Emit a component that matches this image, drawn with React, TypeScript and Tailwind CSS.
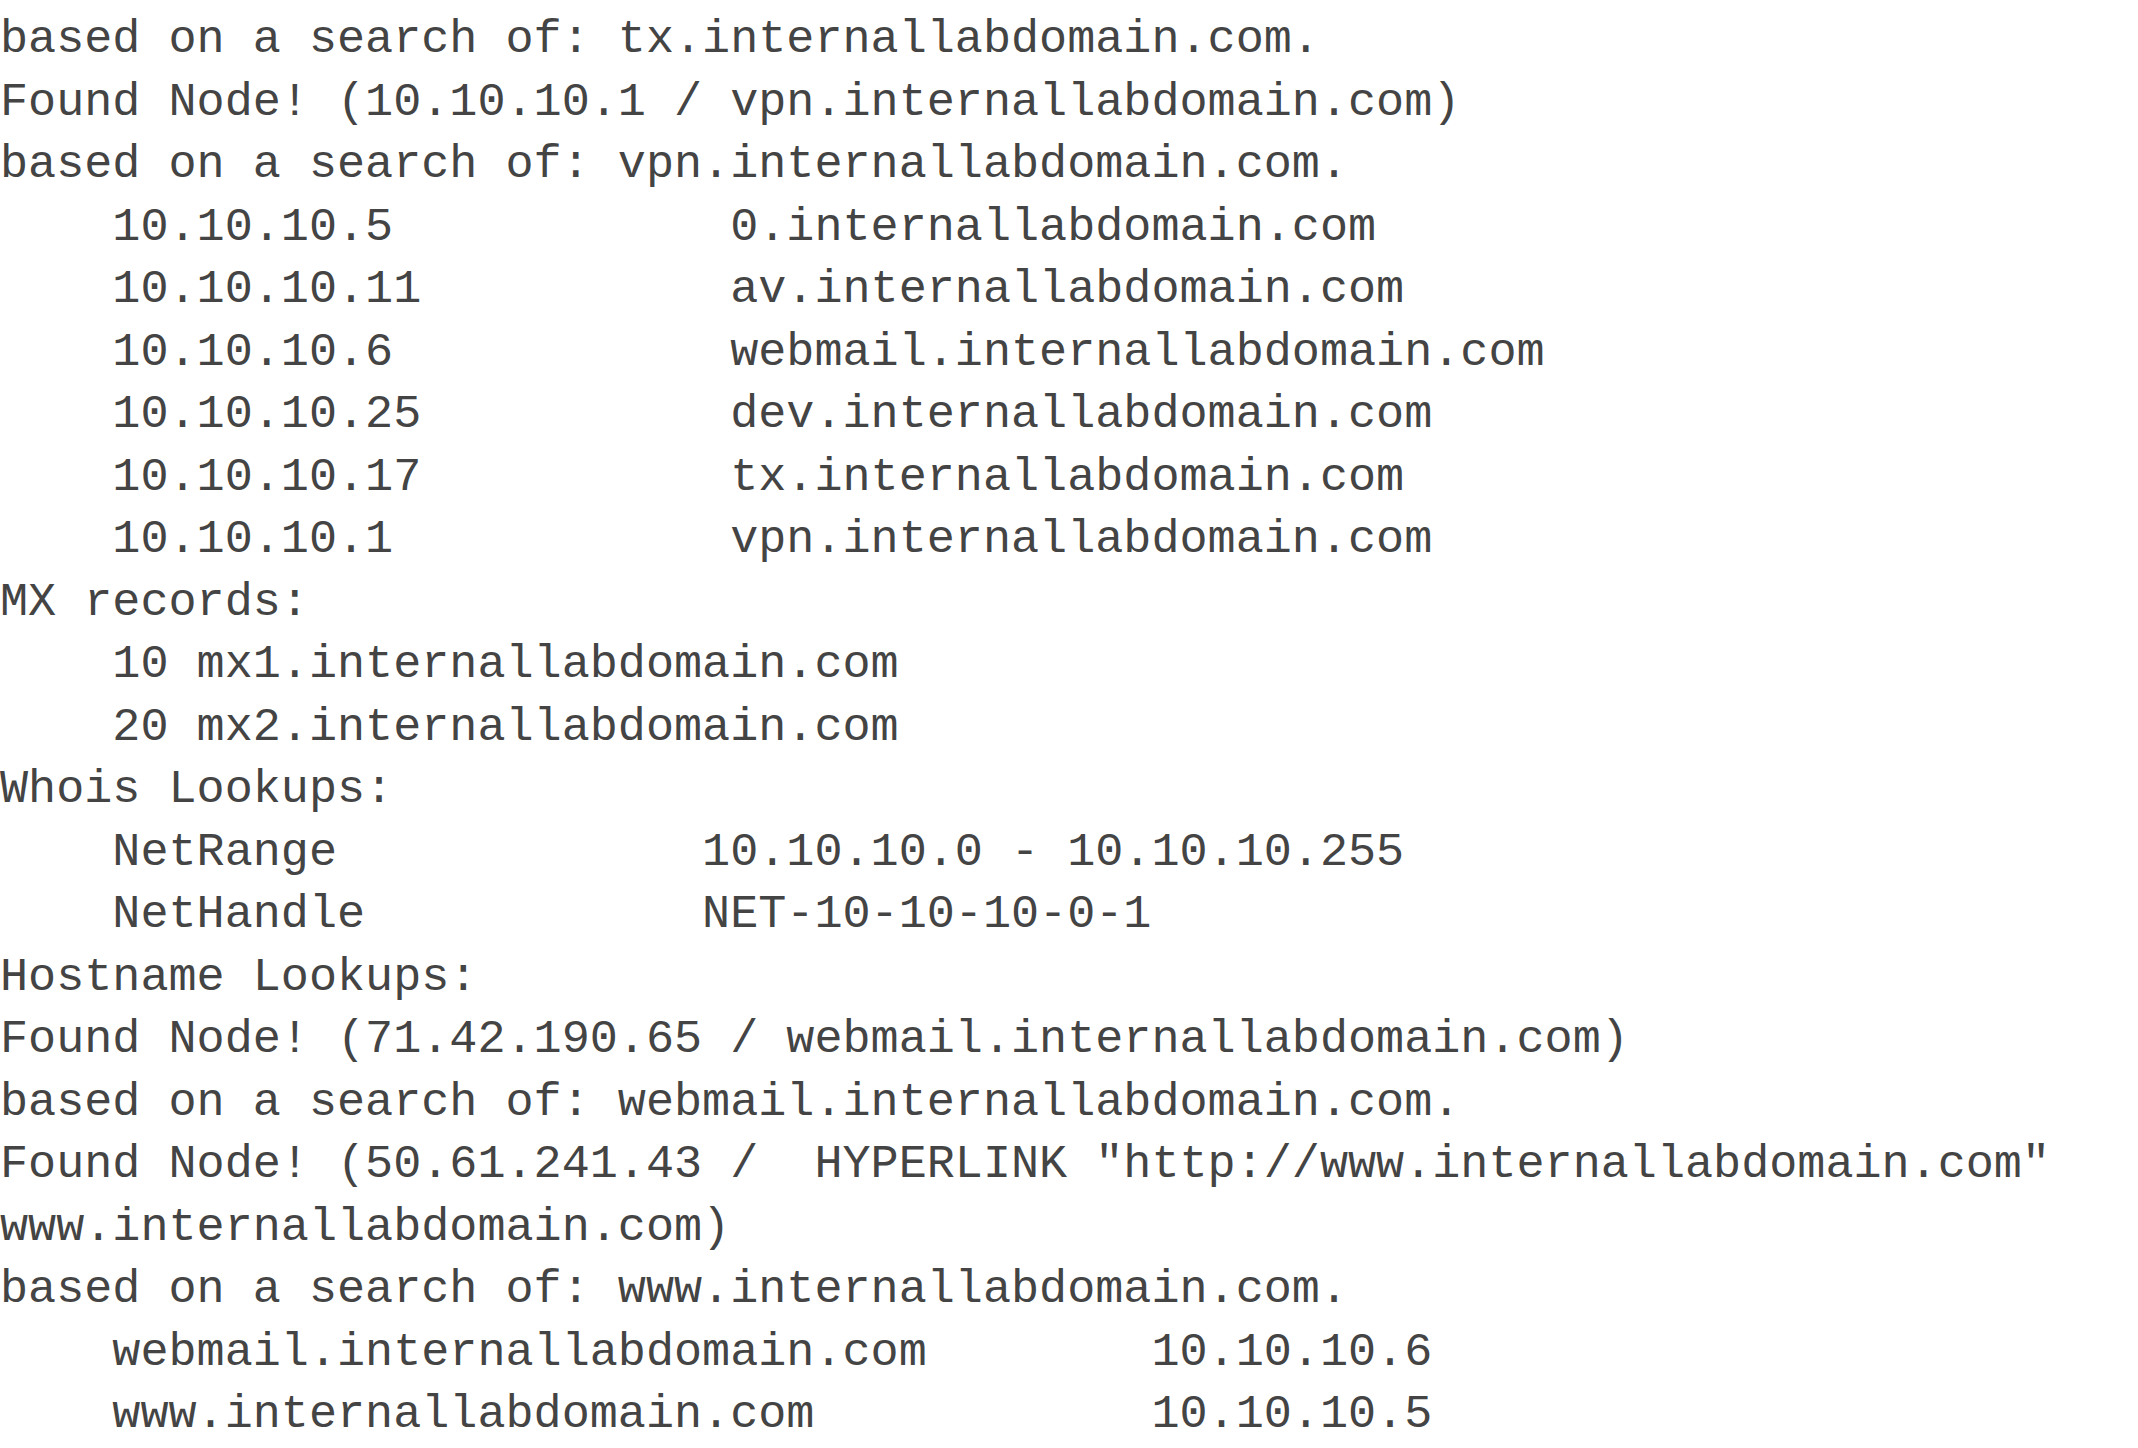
import React from "react";

const lines: string[] = [
  "based on a search of: tx.internallabdomain.com.",
  "Found Node! (10.10.10.1 / vpn.internallabdomain.com)",
  "based on a search of: vpn.internallabdomain.com.",
  "    10.10.10.5            0.internallabdomain.com",
  "    10.10.10.11           av.internallabdomain.com",
  "    10.10.10.6            webmail.internallabdomain.com",
  "    10.10.10.25           dev.internallabdomain.com",
  "    10.10.10.17           tx.internallabdomain.com",
  "    10.10.10.1            vpn.internallabdomain.com",
  "MX records:",
  "    10 mx1.internallabdomain.com",
  "    20 mx2.internallabdomain.com",
  "Whois Lookups:",
  "    NetRange             10.10.10.0 - 10.10.10.255",
  "    NetHandle            NET-10-10-10-0-1",
  "Hostname Lookups:",
  "Found Node! (71.42.190.65 / webmail.internallabdomain.com)",
  "based on a search of: webmail.internallabdomain.com.",
  'Found Node! (50.61.241.43 /  HYPERLINK "http://www.internallabdomain.com"',
  "www.internallabdomain.com)",
  "based on a search of: www.internallabdomain.com.",
  "    webmail.internallabdomain.com        10.10.10.6",
  "    www.internallabdomain.com            10.10.10.5",
];

export default function App() {
  return (
    <div className="w-[2138px] h-[1448px] bg-white overflow-hidden pt-[9px]">
      <div className="font-['Liberation_Mono',monospace] text-[46.8px] leading-[62.5px] text-[#444444]">
        {lines.map((l, i) => (
          <div key={i} className="whitespace-pre">
            {l}
          </div>
        ))}
      </div>
    </div>
  );
}
